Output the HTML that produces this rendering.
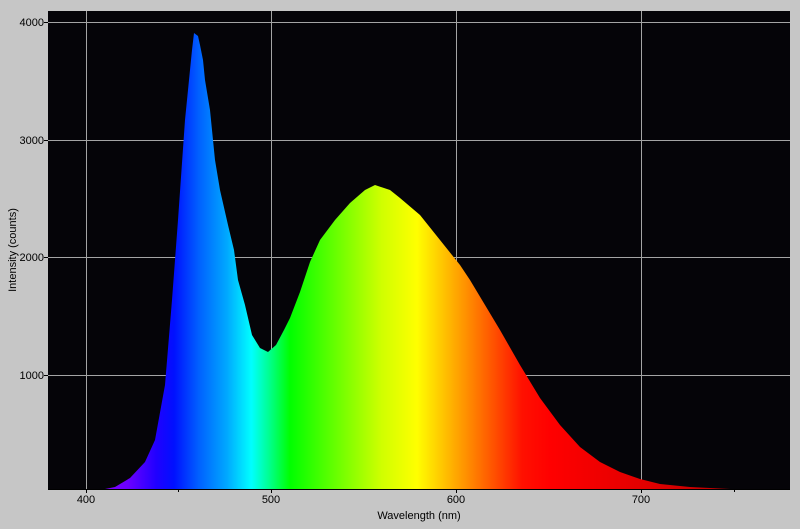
<!DOCTYPE html>
<html><head><style>
html,body{margin:0;padding:0;background:#c6c6c6;}
svg{display:block;font-family:"Liberation Sans",sans-serif;}
</style></head><body>
<svg width="800" height="529" viewBox="0 0 800 529" xmlns="http://www.w3.org/2000/svg">
<defs>
<linearGradient id="sp" gradientUnits="userSpaceOnUse" x1="86" y1="0" x2="790" y2="0">
<stop offset="0" stop-color="#9000ff"/>
<stop offset="0.06" stop-color="#6a00ff"/>
<stop offset="0.10" stop-color="#2000ff"/>
<stop offset="0.125" stop-color="#0010ff"/>
<stop offset="0.16" stop-color="#0060ff"/>
<stop offset="0.20" stop-color="#00a8ff"/>
<stop offset="0.235" stop-color="#00ffff"/>
<stop offset="0.26" stop-color="#00ff90"/>
<stop offset="0.29" stop-color="#00ff00"/>
<stop offset="0.36" stop-color="#70ff00"/>
<stop offset="0.42" stop-color="#d0ff00"/>
<stop offset="0.47" stop-color="#ffff00"/>
<stop offset="0.52" stop-color="#ffb000"/>
<stop offset="0.57" stop-color="#ff6000"/>
<stop offset="0.62" stop-color="#ff1000"/>
<stop offset="0.66" stop-color="#ff0000"/>
<stop offset="0.80" stop-color="#e00000"/>
<stop offset="1" stop-color="#a00000"/>
</linearGradient>
</defs>
<rect x="48" y="11" width="742" height="478" fill="#050408"/>
<g stroke="#a4a4a4" stroke-width="1">
<line x1="86.5" y1="11" x2="86.5" y2="489"/>
<line x1="271.5" y1="11" x2="271.5" y2="489"/>
<line x1="456.5" y1="11" x2="456.5" y2="489"/>
<line x1="641.5" y1="11" x2="641.5" y2="489"/>
<line x1="48" y1="22.5" x2="790" y2="22.5"/>
<line x1="48" y1="140.5" x2="790" y2="140.5"/>
<line x1="48" y1="257.5" x2="790" y2="257.5"/>
<line x1="48" y1="375.5" x2="790" y2="375.5"/>
</g>
<path fill="url(#sp)" d="M100,489 L105,489 L115,487 L130,478 L145,462 L155,440 L165,385 L172,300 L178,220 L185,120 L192,50 L194,33 L198,36 L200,45 L203,60 L205,80 L210,110 L215,160 L220,190 L228,225 L234,250 L238,280 L245,305 L252,335 L260,348 L268,352 L276,345 L284,330 L290,318 L300,292 L310,262 L320,240 L335,220 L350,203 L365,190 L375,185 L390,190 L400,198 L420,215 L440,240 L460,265 L470,280 L485,305 L500,330 L520,365 L540,398 L560,425 L580,447 L600,462 L620,472 L640,479 L660,484 L690,487 L730,489 Z"/>
<line x1="48" y1="489.5" x2="790" y2="489.5" stroke="#000"/>
<g stroke="#000">
<line x1="44" y1="22.5" x2="48" y2="22.5"/>
<line x1="44" y1="140.5" x2="48" y2="140.5"/>
<line x1="44" y1="257.5" x2="48" y2="257.5"/>
<line x1="44" y1="375.5" x2="48" y2="375.5"/>
<line x1="86.5" y1="489" x2="86.5" y2="493"/>
<line x1="271.5" y1="489" x2="271.5" y2="493"/>
<line x1="456.5" y1="489" x2="456.5" y2="493"/>
<line x1="641.5" y1="489" x2="641.5" y2="493"/>
<line x1="734.5" y1="489" x2="734.5" y2="492"/>
<line x1="178.5" y1="489" x2="178.5" y2="492"/>
</g>
<g font-size="11" fill="#000" text-anchor="end">
<text x="44" y="26">4000</text>
<text x="44" y="144">3000</text>
<text x="44" y="261">2000</text>
<text x="44" y="379">1000</text>
</g>
<g font-size="11" fill="#000" text-anchor="middle">
<text x="86" y="503">400</text>
<text x="271" y="503">500</text>
<text x="456" y="503">600</text>
<text x="641" y="503">700</text>
<text x="419" y="519">Wavelength (nm)</text>
</g>
<text font-size="11" fill="#000" text-anchor="middle" transform="translate(16,250) rotate(-90)">Intensity (counts)</text>
</svg>
</body></html>
